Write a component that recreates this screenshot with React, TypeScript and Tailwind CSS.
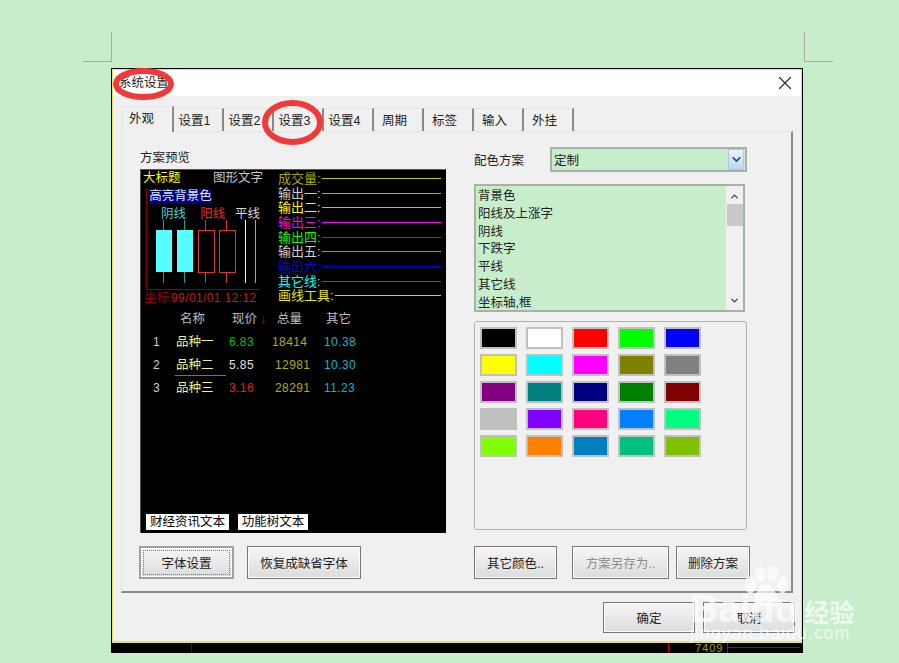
import React from "react";
import { X, ChevronUp, ChevronDown } from "lucide-react";

const tabs = ["设置1", "设置2", "设置3", "设置4", "周期", "标签", "输入", "外挂"];

const series = [
  { label: "成交量:", text: "text-[#a8a800]", line: "bg-[#c8c800]" },
  { label: "输出一:", text: "text-[#d0d0d0]", line: "bg-[#a0a0a0]" },
  { label: "输出二:", text: "text-[#ffff00]", line: "bg-[#c8c800]" },
  { label: "输出三:", text: "text-[#ff00ff]", line: "bg-[#ff00ff]" },
  { label: "输出四:", text: "text-[#00ff00]", line: "bg-[#008000]" },
  { label: "输出五:", text: "text-[#d0d0d0]", line: "bg-[#909090]" },
  { label: "输出六:", text: "text-[#0000ff]", line: "bg-[#0000e0]" },
  { label: "其它线:", text: "text-[#00ffff]", line: "bg-[#008080]" },
  { label: "画线工具:", text: "text-[#e8e800]", line: "bg-[#d8d800]" },
];

const rows = [
  { n: "1", name: "品种一", price: "6.83", pc: "text-[#00c000]", vol: "18414", volCls: "ml-[13px] w-[52px]", other: "10.38", u: false },
  { n: "2", name: "品种二", price: "5.85", pc: "text-[#e0e0e0]", vol: "12981", volCls: "ml-[16px] w-[49px]", other: "10.30", u: true },
  { n: "3", name: "品种三", price: "3.16", pc: "text-[#e02020]", vol: "28291", volCls: "ml-[16px] w-[49px]", other: "11.23", u: false },
];

const listItems = ["背景色", "阳线及上涨字", "阴线", "下跌字", "平线", "其它线", "坐标轴,框"];

const swatches = [
  "bg-[#000000]", "bg-[#ffffff]", "bg-[#ff0000]", "bg-[#00ff00]", "bg-[#0000ff]",
  "bg-[#ffff00]", "bg-[#00ffff]", "bg-[#ff00ff]", "bg-[#808000]", "bg-[#808080]",
  "bg-[#800080]", "bg-[#008080]", "bg-[#000080]", "bg-[#008000]", "bg-[#800000]",
  "bg-[#c0c0c0]", "bg-[#8000ff]", "bg-[#ff0080]", "bg-[#0080ff]", "bg-[#00ff80]",
  "bg-[#80ff00]", "bg-[#ff8000]", "bg-[#0080c0]", "bg-[#00c080]", "bg-[#80c000]",
];

function Btn({ children, className = "", disabled = false }: { children: React.ReactNode; className?: string; disabled?: boolean }) {
  return (
    <div
      className={`flex items-center justify-center border border-[#777] pt-[3px] shadow-[inset_0_0_0_1px_#fdfdfd] bg-gradient-to-b from-[#f6f6f6] to-[#dcdcdc] text-[12.5px] ${disabled ? "text-[#8c8c8c]" : "text-[#222]"} ${className}`}
    >
      {children}
    </div>
  );
}

function Candles() {
  return (
    <svg width="112" height="64" viewBox="0 0 112 64" className="block">
      <line x1="17.5" y1="0" x2="17.5" y2="63" stroke="#1d9c9c" />
      <rect x="10" y="10" width="16" height="42" fill="#55ffff" />
      <line x1="38.5" y1="0" x2="38.5" y2="63" stroke="#1d9c9c" />
      <rect x="31" y="10" width="16" height="42" fill="#55ffff" />
      <line x1="59.5" y1="0" x2="59.5" y2="10" stroke="#e03030" />
      <rect x="52.5" y="10.5" width="16" height="42" fill="none" stroke="#e03030" />
      <line x1="59.5" y1="53" x2="59.5" y2="63" stroke="#e03030" />
      <line x1="80.5" y1="0" x2="80.5" y2="10" stroke="#e03030" />
      <rect x="73.5" y="10.5" width="16" height="42" fill="none" stroke="#e03030" />
      <line x1="80.5" y1="53" x2="80.5" y2="63" stroke="#e03030" />
      <line x1="99.5" y1="0" x2="99.5" y2="63" stroke="#f0f0f0" />
      <line x1="109.5" y1="0" x2="109.5" y2="63" stroke="#a0a0a0" />
    </svg>
  );
}

function Preview() {
  return (
    <div className="mt-[3px] flex h-[364px] w-[306px] flex-col border-t border-l border-[#555] bg-black text-[12.5px] leading-[15px]">
      <div className="flex pt-[1px]">
        <div className="w-[137px]">
          <div className="flex h-[16px] pl-[2px]">
            <span className="w-[70px] text-[#ffff00]">大标题</span>
            <span className="text-[#c8c8c8]">图形文字</span>
          </div>
          <div className="ml-[5px] mt-[1px] h-[102px] w-[114px] border-b border-l border-[#8a0000] pl-[2px] pt-[1px]">
            <div className="w-[63px] whitespace-nowrap bg-[#000080] text-center text-[#d8e8ff]">高亮背景色</div>
            <div className="mt-[3px] flex h-[15px] whitespace-nowrap leading-[15px]">
              <span className="ml-[12px] w-[42px] text-[#55d0d0]">阴线</span>
              <span className="w-[37px] text-[#e03030]">阳线</span>
              <span className="text-[#d8d8d8]">平线</span>
            </div>
            <div className="-ml-[3px] -mt-[2px]">
              <Candles />
            </div>
          </div>
          <div className="mt-[1px] flex h-[16px] whitespace-nowrap pl-[3px]">
            <span className="text-[#900000]">坐标</span>
            <span className="ml-[2px] font-['Liberation_Sans'] text-[12px] tracking-[0.4px] text-[#c81818]">99/01/01 12:12</span>
          </div>
        </div>
        <div className="flex-1">
          {series.map((s) => (
            <div key={s.label} className="flex h-[14.7px] items-center">
              <span className={`whitespace-nowrap text-[13px] ${s.text}`}>{s.label}</span>
              <span className={`ml-[1px] mr-[5px] h-[1px] flex-1 ${s.line}`} />
            </div>
          ))}
        </div>
      </div>
      <div className="mt-[5px] flex h-[16px] text-[#bdbdbd]">
        <span className="ml-[39px] w-[52px]">名称</span>
        <span className="w-[28px]">现价</span>
        <span className="w-[17px] text-[#d00000]">↓</span>
        <span className="w-[49px]">总量</span>
        <span>其它</span>
      </div>
      {rows.map((r) => (
        <div key={r.n} className="mt-[7px] flex h-[16px] whitespace-nowrap">
          <span className="ml-[12px] w-[22px] font-['Liberation_Sans'] text-[12px] text-[#d0d0d0]">{r.n}</span>
          <span className={`w-[51px] pl-[1px] text-[#f0f080] ${r.u ? "h-[18px] border-b border-[#808000]" : ""}`}>{r.name}</span>
          <span className={`ml-[3px] w-[30px] font-['Liberation_Sans'] text-[12px] tracking-[0.4px] ${r.pc}`}>{r.price}</span>
          <span className={`${r.volCls} font-['Liberation_Sans'] text-[12px] tracking-[0.4px] text-[#b0b000]`}>{r.vol}</span>
          <span className="font-['Liberation_Sans'] text-[12px] tracking-[0.4px] text-[#00b8d8]">{r.other}</span>
        </div>
      ))}
      <div className="mt-auto mb-[3px] ml-[5px] flex gap-[9px]">
        <span className="flex h-[16px] w-[83px] items-center justify-center whitespace-nowrap bg-white text-black">财经资讯文本</span>
        <span className="flex h-[16px] w-[70px] items-center justify-center whitespace-nowrap bg-white text-black">功能树文本</span>
      </div>
    </div>
  );
}

export default function App() {
  return (
    <div className="relative h-[663px] w-[899px] overflow-hidden bg-[#c8edcb] pl-[111px] pt-[68px] font-['Liberation_Sans','Noto_Sans_CJK_SC',sans-serif]">
      {/* page corner marks */}
      <div className="absolute left-[83px] top-[32px] h-[30px] w-[29px] border-b border-r border-[#a8a8a8]" />
      <div className="absolute left-[804px] top-[32px] h-[30px] w-[29px] border-b border-l border-[#a8a8a8]" />

      {/* window behind the dialog */}
      <div className="flex h-[585px] w-[692px] flex-col bg-black pl-[1px] pt-[1px] pr-[1px]">
        <div className="flex h-[574px] flex-col border-b-2 border-l border-r border-t border-[#e8e070] bg-[#f0f0f0]">
          {/* title bar */}
          <div className="flex h-[26px] shrink-0 items-center justify-between bg-white pl-[6px] pr-[5px] text-[12.5px] text-[#222]">
            <span>系统设置</span>
            <X size={22} strokeWidth={1.3} className="text-[#333]" />
          </div>

          {/* tabs */}
          <div className="mt-[10px] flex h-[25px] pl-[9px] text-[12.5px] text-[#222]">
            <div className="z-10 flex h-[26px] w-[52px] items-center justify-center border-l border-t border-r-2 border-l-[#e4e4e4] border-t-[#e4e4e4] border-r-[#8a8a8a] bg-[#f0f0f0] pr-[12px]">
              外观
            </div>
            {tabs.map((t) => (
              <div key={t} className="mt-[2px] flex h-[23px] w-[50px] items-center justify-center whitespace-nowrap border-r-2 border-t border-r-[#8a8a8a] border-t-[#e4e4e4] bg-[#f0f0f0] pr-[7px] pt-[2px]">
                {t}
              </div>
            ))}
          </div>

          {/* tab panel */}
          <div className="ml-[8px] flex h-[462px] w-[672px] border-b-2 border-l border-r-2 border-t border-b-[#8c8c8c] border-l-[#e4e4e4] border-r-[#8c8c8c] border-t-[#e4e4e4] pl-[18px] pt-[15px] text-[12.5px] text-[#222]">
            <div className="w-[306px] pt-[3px]">
              <div className="h-[16px] leading-[17px]">方案预览</div>
              <Preview />
              <div className="mt-[13px] flex">
                <Btn className="-ml-[1px] h-[33px] w-[95px] border-2 border-[#a0a0a0] !pt-0">
                  <span className="flex h-[25px] w-[87px] items-center justify-center border border-dotted border-[#777] pt-[3px]">字体设置</span>
                </Btn>
                <Btn className="ml-[13px] h-[33px] w-[114px]">恢复成缺省字体</Btn>
              </div>
            </div>

            <div className="ml-[28px] w-[276px]">
              <div className="flex h-[25px] items-center">
                <span className="w-[76px] pt-[3px]">配色方案</span>
                <div className="flex h-[25px] w-[197px] items-center justify-between border-2 border-[#a8b0a8] bg-[#c8edcb] pl-[2px] pr-[1px]">
                  <span className="pt-[3px]">定制</span>
                  <span className="flex h-[21px] w-[16px] items-center justify-center border border-[#a8c8f0] bg-gradient-to-b from-[#eef4ff] to-[#bcd4f4]">
                    <ChevronDown size={13} strokeWidth={3} className="text-[#2a4a78]" />
                  </span>
                </div>
              </div>

              <div className="mt-[12px] flex h-[128px] w-[271px] border-2 border-[#a8b0a8] bg-[#c8edcb]">
                <div className="flex-1 pl-[2px] pt-[2px]">
                  {listItems.map((i) => (
                    <div key={i} className="h-[17.8px] leading-[17.8px]">{i}</div>
                  ))}
                </div>
                <div className="flex w-[17px] flex-col items-center bg-[#f0f0f0]">
                  <ChevronUp size={11} strokeWidth={2.5} className="mt-[5px] text-[#333]" />
                  <div className="mt-[2px] h-[22px] w-[16px] bg-[#c8c8c8]" />
                  <ChevronDown size={11} strokeWidth={2.5} className="mb-[4px] mt-auto text-[#333]" />
                </div>
              </div>

              <div className="mt-[9px] h-[209px] w-[273px] rounded-[3px] border border-[#b0b0b0] p-[5px]">
                <div className="grid grid-cols-[repeat(5,37px)] gap-x-[9px] gap-y-[5px]">
                  {swatches.map((c) => (
                    <div key={c} className={`h-[22px] border-2 border-[#c0c0c0] ${c}`} />
                  ))}
                </div>
              </div>

              <div className="mt-[16px] flex">
                <Btn className="h-[33px] w-[83px]">其它颜色..</Btn>
                <Btn disabled className="ml-[15px] h-[33px] w-[97px]">方案另存为..</Btn>
                <Btn className="ml-[7px] h-[33px] w-[74px]">删除方案</Btn>
              </div>
            </div>
          </div>

          {/* footer */}
          <div className="mt-[9px] flex pl-[490px] text-[12.5px]">
            <Btn className="h-[31px] w-[92px]">确定</Btn>
            <Btn className="ml-[8px] h-[31px] w-[92px]">取消</Btn>
          </div>
        </div>

        {/* window behind, bottom strip */}
        <div className="flex h-[10px] items-start overflow-hidden font-['Liberation_Sans'] text-[11px] leading-[10px] text-[#a8a000]">
          <span className="ml-[79px] h-[10px] w-[1px] bg-[#700000]" />
          <span className="ml-[476px] h-[10px] w-[1px] bg-[#c00000]" />
          <span className="ml-[26px] tracking-[1px]">7409</span>
          <span className="ml-[4px] h-[10px] w-[1px] bg-[#c00000]" />
          <span className="mr-[2px] mt-[4px] h-[1px] flex-1 bg-[#c00000]" />
        </div>
      </div>

      {/* red hand-drawn circles */}
      <svg className="pointer-events-none absolute left-[108px] top-[64px]" width="225" height="85" viewBox="0 0 225 85">
        <ellipse cx="35.5" cy="20" rx="27.5" ry="13" fill="none" stroke="#f03a3a" strokeWidth="6" />
        <ellipse cx="184.5" cy="58.5" rx="27.5" ry="19.5" fill="none" stroke="#f03a3a" strokeWidth="6" />
      </svg>

      {/* watermark */}
      <svg className="pointer-events-none absolute left-[743px] top-[566px]" width="46" height="42" viewBox="0 0 50 38" preserveAspectRatio="none" fill="#ffffff" opacity="0.72">
        <ellipse cx="8" cy="17" rx="6" ry="8" />
        <ellipse cx="19" cy="7" rx="6" ry="7" />
        <ellipse cx="32" cy="7" rx="6" ry="7" />
        <ellipse cx="43" cy="17" rx="5.5" ry="8" />
        <path d="M25 16c-7 0-8 6-12 10-3 4-1 10 5 10 3 0 5-1 7-1s4 1 7 1c6 0 8-6 5-10-4-4-5-10-12-10z" />
      </svg>
      <div className="pointer-events-none absolute left-[690px] top-[587px] flex items-baseline text-white/70">
        <span className="font-['Liberation_Sans'] text-[39px] font-bold leading-[44px]">Baidu</span>
        <span className="ml-[6px] text-[25px] font-bold leading-[44px]">经验</span>
      </div>
      <div className="pointer-events-none absolute left-[690px] top-[623px] font-['Liberation_Sans'] text-[18px] leading-[20px] tracking-[0.9px] text-white/70">
        jingyan.baidu.com
      </div>
    </div>
  );
}
